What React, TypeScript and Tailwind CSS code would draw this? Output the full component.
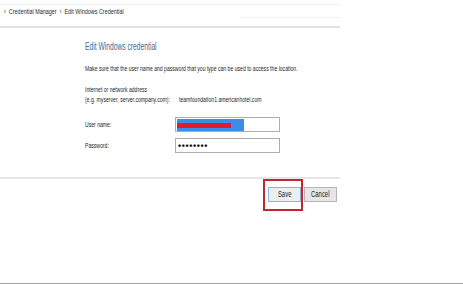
import React from "react";

const S = "inline-block origin-left whitespace-nowrap";
const B = `${S} scale-x-[0.68] text-[7.5px] leading-[9px] text-[#262626]`;

export default function App() {
  return (
    <div className="w-[463px] h-[284px] bg-white flex flex-col overflow-hidden text-[#333] font-['Liberation_Sans',Arial,sans-serif]">
      {/* header / breadcrumb */}
      <div className="w-[340px] pt-[4px] flex flex-col">
        <div className="relative h-[14px] border-t border-[#efefef] flex items-center pl-[4px]">
          <span className={`${S} scale-x-[0.68] text-[8px] leading-[10px] text-[#2b2b2b]`}>
            ›&nbsp;&nbsp;Credential Manager&nbsp;&nbsp;›&nbsp;&nbsp;Edit Windows Credential
          </span>
          <div className="absolute right-0 bottom-0 w-[100px] h-px bg-[#f0f0f0]" />
        </div>
        <div className="h-[8px]" />
        <div className="h-[2px] bg-[#e3e3e3]" />
      </div>

      {/* content */}
      <div className="pl-[85px] flex flex-col">
        <div className="mt-[12px] h-[12px] flex items-center">
          <span className={`${S} scale-x-[0.61] text-[11px] leading-[12px] text-[#4b6690]`}>Edit Windows credential</span>
        </div>
        <div className="mt-[11px] h-[10px] flex items-center">
          <span className={B}>
            Make sure that the user name and password that you type can be used to access the location.
          </span>
        </div>
        <div className="mt-[11px] h-[10px] flex items-center">
          <span className={B}>Internet or network address</span>
        </div>
        <div className="h-[10px] grid grid-cols-[94px_1fr] items-center">
          <span className={B}>(e.g. myserver, server.company.com):</span>
          <span className={B}>teamfoundation1.americanhotel.com</span>
        </div>

        <div className="mt-[13px] h-[15px] grid grid-cols-[90px_105px] items-center">
          <span className={B}>User name:</span>
          <div className="h-[15px] border border-[#abadb3] bg-white flex items-center pl-px">
            <div className="relative w-[67px] h-[12px] bg-[#3a8ee6]">
              <div className="absolute left-0 top-[4px] w-[54px] h-[5px] bg-[#e11a2c]" />
            </div>
          </div>
        </div>
        <div className="mt-[6px] h-[15px] grid grid-cols-[90px_105px] items-center">
          <span className={B}>Password:</span>
          <div className="h-[15px] border border-[#abadb3] bg-white flex items-center pl-[2px]">
            <span className="text-[9px] leading-[8px] font-bold tracking-[0.6px] text-[#111]">••••••••</span>
          </div>
        </div>
      </div>

      {/* separator */}
      <div className="mt-[24px] w-[340px] h-[2px] bg-[#e6e6e6]" />

      {/* buttons */}
      <div className="w-[340px] mt-[8px] flex justify-end gap-[3px] pr-[3px]">
        <div className="relative">
          <button className="w-[33px] h-[15px] border border-[#8fb4d9] bg-[#e8f0f6] flex items-center justify-center">
            <span className={`${S} !origin-center scale-x-[0.7] text-[8.5px] leading-[9px] text-[#222]`}>Save</span>
          </button>
          <div className="absolute -left-[5px] -top-[8px] w-[40px] h-[32px] border-2 border-[#c3262f]" />
        </div>
        <button className="w-[33px] h-[15px] border border-[#b5b5b5] bg-[#e6e6e6] flex items-center justify-center">
          <span className={`${S} !origin-center scale-x-[0.7] text-[8.5px] leading-[9px] text-[#222]`}>Cancel</span>
        </button>
      </div>

      <div className="mt-auto h-px bg-[#a2a2a2]" />
    </div>
  );
}
